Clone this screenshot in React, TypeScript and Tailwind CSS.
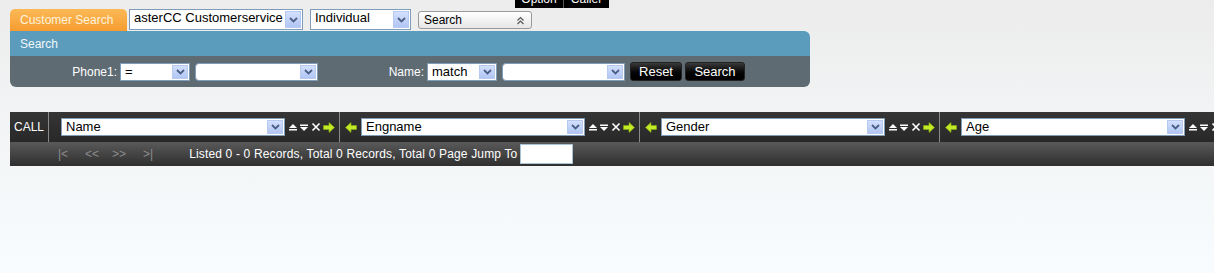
import React from 'react';

const font = { fontFamily: '"Liberation Sans", Arial, sans-serif' };

function DropArrow() {
    return (
        <span className="flex h-full w-[16px] shrink-0 items-center justify-center border border-[#b7c9f1] bg-linear-to-b from-[#d3e0fc] to-[#b2c6f4]">
            <svg width="9" height="6" viewBox="0 0 9 6">
                <path d="M1 1 L4.5 4.5 L8 1" fill="none" stroke="#4b5f86" strokeWidth="1.8" />
            </svg>
        </span>
    );
}

function Select({ value, w, h = 'h-[18px]', rounded = false, text = 'text-[13px]' }: { value: string; w: string; h?: string; rounded?: boolean; text?: string }) {
    return (
        <div className={`${w} ${h} flex shrink-0 items-stretch border border-[#7f9db9] bg-white p-[1px] ${rounded ? 'rounded-l-[4px]' : ''}`}>
            <span className={`flex-1 overflow-hidden whitespace-nowrap pl-[3px] leading-[14px] text-black ${text}`}>{value}</span>
            <DropArrow />
        </div>
    );
}

function UpIcon() {
    return (
        <svg width="10" height="9" viewBox="0 0 10 9">
            <path d="M1 5 L5 1 L9 5 Z" fill="#fff" />
            <rect x="1" y="6" width="8" height="1.5" fill="#fff" />
        </svg>
    );
}

function DownIcon() {
    return (
        <svg width="10" height="9" viewBox="0 0 10 9">
            <rect x="1" y="1.5" width="8" height="1.5" fill="#fff" />
            <path d="M1 4 L9 4 L5 8 Z" fill="#fff" />
        </svg>
    );
}

function CloseIcon() {
    return (
        <svg width="10" height="10" viewBox="0 0 10 10">
            <path d="M1.5 1.5 L8.5 8.5 M8.5 1.5 L1.5 8.5" stroke="#fff" strokeWidth="1.6" />
        </svg>
    );
}

function GreenArrow({ left = false }: { left?: boolean }) {
    return (
        <svg width="12" height="11" viewBox="0 0 12 11" style={{ transform: left ? 'scaleX(-1)' : undefined }}>
            <path d="M0.5 3.5 L6 3.5 L6 0.5 L11.5 5.5 L6 10.5 L6 7.5 L0.5 7.5 Z" fill="#c2ea25" stroke="#86ad14" strokeWidth="0.6" />
        </svg>
    );
}

function Column({ label, first = false, last = false }: { label: string; first?: boolean; last?: boolean }) {
    return (
        <div className={`flex h-full shrink-0 items-center ${first ? 'w-[291px] pl-[12px]' : 'w-[300px] pl-[5px]'} ${last ? '' : 'border-r border-[#8a8a8a]'}`}>
            {first ? null : (
                <span className="mr-[4px] flex w-[12px] justify-center"><GreenArrow left /></span>
            )}
            <Select value={label} w="w-[224px]" />
            <div className="ml-[3px] flex items-center">
                <UpIcon />
                <span className="ml-[1px]"><DownIcon /></span>
                <span className="ml-[2px]"><CloseIcon /></span>
                <span className="ml-[2px]"><GreenArrow /></span>
            </div>
        </div>
    );
}

export default function App() {
    return (
        <div className="h-[273px] w-full overflow-hidden bg-linear-to-b from-[#ececec] via-[#f3f5f6] to-[#f8fcfe]" style={font}>
            {/* tabs above, only their lower edge shows */}
            <div className="h-[9px]">
                <div className="ml-[515px] flex h-[8px] w-[94px] overflow-hidden bg-black">
                    <span className="-mt-[8px] w-[49px] border-r border-[#555] text-center text-[12px] leading-[14px] text-white">Option</span>
                    <span className="-mt-[8px] flex-1 text-center text-[12px] leading-[14px] text-white">Caller</span>
                </div>
            </div>

            <div className="flex items-start pl-[10px]">
                <div className="flex h-[22px] w-[117px] items-center rounded-t-[5px] bg-linear-to-b from-[#fbb955] to-[#f69c2f] pl-[10px] text-[12px] text-[#fff3dc]">
                    Customer Search
                </div>
                <div className="ml-[2px]">
                    <Select value="asterCC Customerservice" w="w-[174px]" h="h-[21px]" />
                </div>
                <div className="ml-[7px]">
                    <Select value="Individual" w="w-[101px]" h="h-[21px]" />
                </div>
                <div className="ml-[7px] mt-[2px] flex h-[18px] w-[114px] items-center justify-between rounded-[3px] border border-[#9a9a9a] bg-linear-to-b from-white to-[#e6e6e6] pl-[5px] pr-[6px] text-[12px] text-black">
                    <span>Search</span>
                    <svg width="9" height="9" viewBox="0 0 9 9">
                        <path d="M1.5 4.5 L4.5 1.5 L7.5 4.5 M1.5 8 L4.5 5 L7.5 8" fill="none" stroke="#555" strokeWidth="1.2" />
                    </svg>
                </div>
            </div>

            <div className="ml-[10px] w-[800px]">
                <div className="flex h-[25px] items-center rounded-tr-[6px] bg-[#5b9bbc] pl-[10px] text-[12px] text-[#f2f8fb]">Search</div>
                <div className="flex h-[31px] items-center rounded-b-[6px] bg-[#5e6b73] text-[12px] text-white">
                    <span className="w-[110px] pr-[3px] text-right">Phone1:</span>
                    <Select value="=" w="w-[70px]" />
                    <div className="ml-[5px]">
                        <Select value="" w="w-[123px]" rounded />
                    </div>
                    <span className="w-[109px] pr-[3px] text-right">Name:</span>
                    <Select value="match" w="w-[70px]" />
                    <div className="ml-[5px]">
                        <Select value="" w="w-[123px]" rounded />
                    </div>
                    <button className="ml-[5px] h-[19px] w-[52px] rounded-[3px] border border-[#222] bg-linear-to-b from-[#3a3a3a] via-[#0a0a0a] to-black text-[13px] leading-[16px] text-white">Reset</button>
                    <button className="ml-[3px] h-[19px] w-[60px] rounded-[3px] border border-[#222] bg-linear-to-b from-[#3a3a3a] via-[#0a0a0a] to-black text-[13px] leading-[16px] text-white">Search</button>
                </div>
            </div>

            <div className="ml-[10px] mt-[25px] w-[1204px] overflow-hidden">
                <div className="flex h-[30px] w-max items-center bg-linear-to-b from-[#353535] to-[#282828] text-[12px] text-white">
                    <span className="flex h-full w-[39px] items-center border-r border-[#8a8a8a] pl-[4px]">CALL</span>
                    <Column label="Name" first />
                    <Column label="Engname" />
                    <Column label="Gender" />
                    <Column label="Age" last />
                </div>
                <div className="flex h-[24px] items-center bg-linear-to-b from-[#5a5a5a] to-[#2f2f2f] text-[12px]">
                    <div className="ml-[48px] flex text-[#8c8c8c]">
                        <span className="w-[27px]">|&lt;</span>
                        <span className="w-[27px]">&lt;&lt;</span>
                        <span className="w-[31px]">&gt;&gt;</span>
                        <span>&gt;|</span>
                    </div>
                    <span className="ml-[36px] tracking-[0.16px] text-white">Listed 0 - 0 Records, Total 0 Records, Total 0 Page Jump To</span>
                    <div className="ml-[3px] h-[20px] w-[53px] border border-[#a9c3d6] bg-white" />
                </div>
            </div>
        </div>
    );
}
